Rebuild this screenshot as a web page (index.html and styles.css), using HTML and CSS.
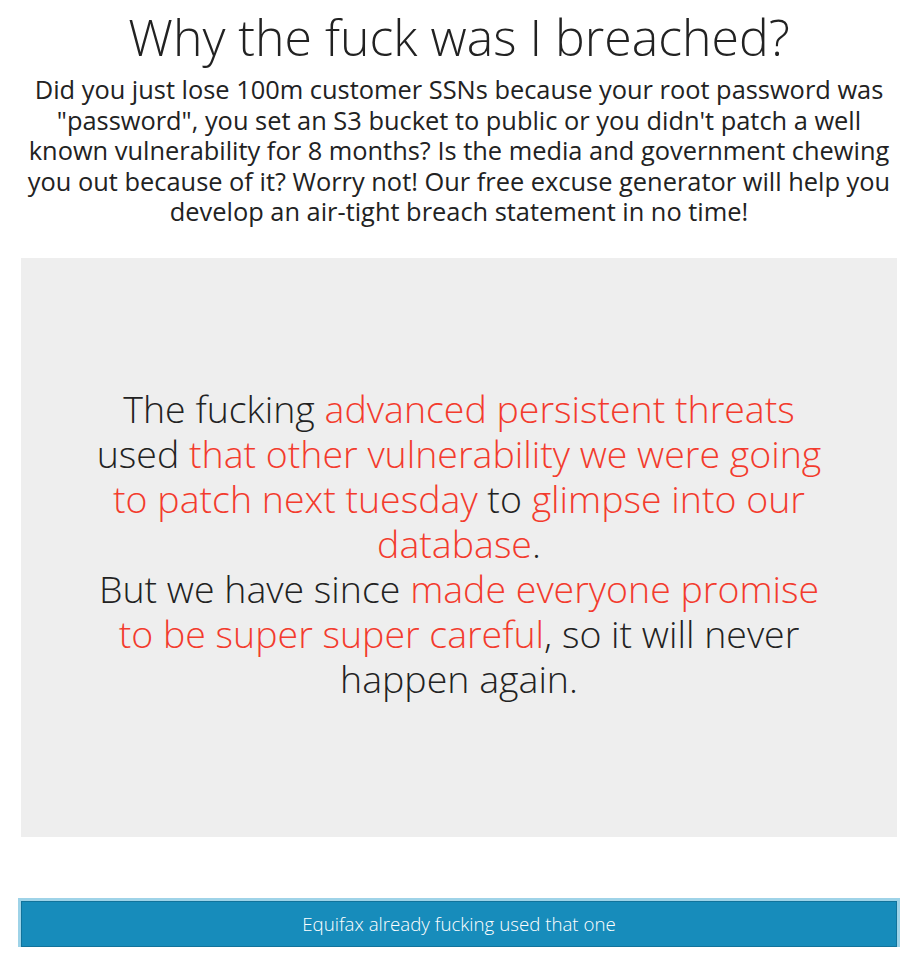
FILE: index.html
```html
<!DOCTYPE html>
<html lang="en">
<head>
    <meta charset="UTF-8">
    <meta name="viewport" content="width=device-width, initial-scale=1.0">
    <title>Why the fuck was I breached?</title>
    <link rel="stylesheet" href="styles.css">
</head>
<body>

    <div class="page">
        <h1 class="title">Why the fuck was I breached?</h1>
        <p class="intro">
            Did you just lose 100m customer SSNs because your root password was "password", you set an S3 bucket to public or you didn't patch a well known vulnerability for 8 months? Is the media and government chewing you out because of it? Worry not! Our free excuse generator will help you develop an air-tight breach statement in no time!
        </p>

        <div class="excuse-box">
            <p class="excuse">
                The fucking <span class="hl">advanced persistent threats</span>
                used <span class="hl">that other vulnerability we were going to patch next tuesday</span>
                to <span class="hl">glimpse into our database</span>.<br>
                But we have since <span class="hl">made everyone promise to be super super careful</span>, so it will never happen again.
            </p>
        </div>

        <button class="excuse-btn" type="button">Equifax already fucking used that one</button>
    </div>

</body>
</html>
```

FILE: styles.css
```css
* {
    box-sizing: border-box;
}
body {
    margin: 0;
    background: white;
    color: #222;
    font-family: "Open Sans", Arial, sans-serif;
}
.page {
    padding: 7px 23px 0 21px;
    text-align: center;
}
.title {
    margin: 0;
    font-size: 50px;
    font-weight: 300;
    line-height: 60px;
}
.intro {
    margin: 7px 0 0;
    font-size: 25.4px;
    line-height: 30.5px;
}
.excuse-box {
    margin-top: 31px;
    height: 579px;
    padding-bottom: 8px;
    background: #eee;
    display: flex;
    align-items: center;
    justify-content: center;
}
.excuse {
    max-width: 740px;
    margin: 0;
    font-size: 37.5px;
    font-weight: 300;
    line-height: 45px;
}
.hl {
    color: #f33b2d;
}
.excuse-btn {
    display: block;
    width: 100%;
    height: 46px;
    margin-top: 64px;
    background: #178cbb;
    color: white;
    border: 1px solid #12739b;
    box-shadow: 0 0 0 3px #9ed3e8;
    font-family: "Open Sans", Arial, sans-serif;
    font-size: 18.7px;
    font-weight: 300;
    cursor: pointer;
}
```
